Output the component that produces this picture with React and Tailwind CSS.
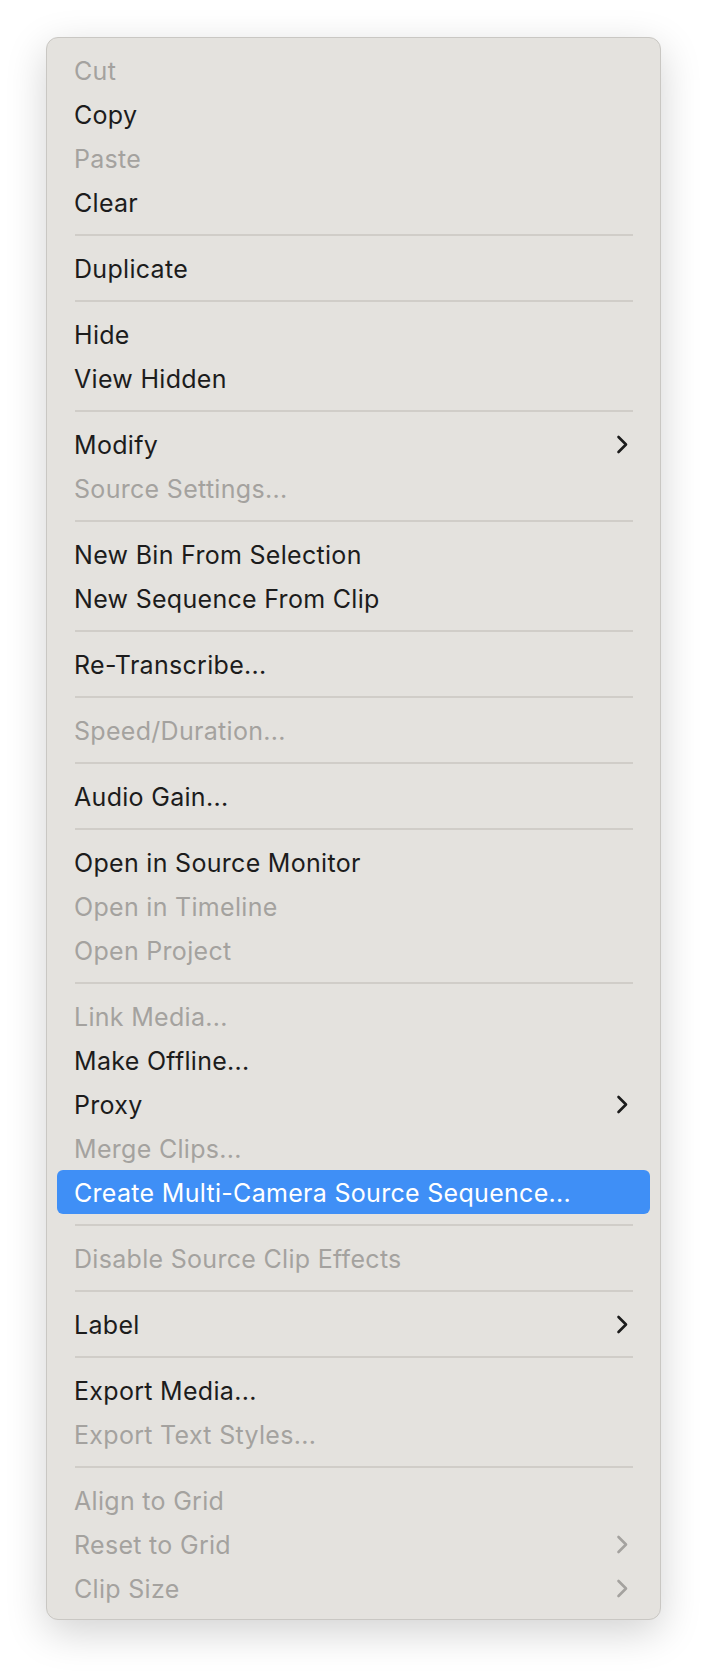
import React from "react";

const groups = [
  [["Cut", true], ["Copy"], ["Paste", true], ["Clear"]],
  [["Duplicate"]],
  [["Hide"], ["View Hidden"]],
  [["Modify", false, true], ["Source Settings...", true]],
  [["New Bin From Selection"], ["New Sequence From Clip"]],
  [["Re-Transcribe..."]],
  [["Speed/Duration...", true]],
  [["Audio Gain..."]],
  [["Open in Source Monitor"], ["Open in Timeline", true], ["Open Project", true]],
  [
    ["Link Media...", true],
    ["Make Offline..."],
    ["Proxy", false, true],
    ["Merge Clips...", true],
    ["Create Multi-Camera Source Sequence...", false, false, true],
  ],
  [["Disable Source Clip Effects", true]],
  [["Label", false, true]],
  [["Export Media..."], ["Export Text Styles...", true]],
  [["Align to Grid", true], ["Reset to Grid", true, true], ["Clip Size", true, true]],
];

function Chevron({ className }) {
  return (
    <svg width="13" height="19" viewBox="0 0 13 19" className={className}>
      <path d="M2.5 2 L10 9.5 L2.5 17" fill="none" stroke="currentColor" strokeWidth="2.6" strokeLinecap="round" strokeLinejoin="round" />
    </svg>
  );
}

function Item({ label, disabled, sub, active }) {
  const color = active ? "text-white" : disabled ? "text-[#a4a29f]" : "text-[#1c1c1c]";
  return (
    <div
      className={`mx-[10px] h-[44px] flex items-center justify-between pl-[17px] pr-[21px] rounded-[6px] ${
        active ? "bg-[#3f8ff6]" : ""
      } ${color}`}
    >
      <span className="text-[25px] leading-none tracking-[0.3px] pt-[2px]">{label}</span>
      {sub && <Chevron className={disabled ? "text-[#a4a29f]" : "text-[#1c1c1c]"} />}
    </div>
  );
}

export default function App() {
  return (
    <div className="min-h-[1674px] w-[706px] bg-white pt-[37px] pl-[46px]" style={{ fontFamily: "Inter, 'Noto Sans', sans-serif" }}>
      <div className="w-[615px] bg-[#e4e2de] border border-[#c9c7c3] rounded-[12px] pt-[10px] pb-[9px] shadow-[0_12px_40px_rgba(0,0,0,0.18)]">
        {groups.map((g, gi) => (
          <div key={gi}>
            {gi > 0 && (
              <div className="h-[22px] flex items-center">
                <div className="ml-[28px] w-[558px] h-[2px] bg-[#d0cdc8]" />
              </div>
            )}
            {g.map(([label, disabled, sub, active]) => (
              <Item key={label} label={label} disabled={disabled} sub={sub} active={active} />
            ))}
          </div>
        ))}
      </div>
    </div>
  );
}
